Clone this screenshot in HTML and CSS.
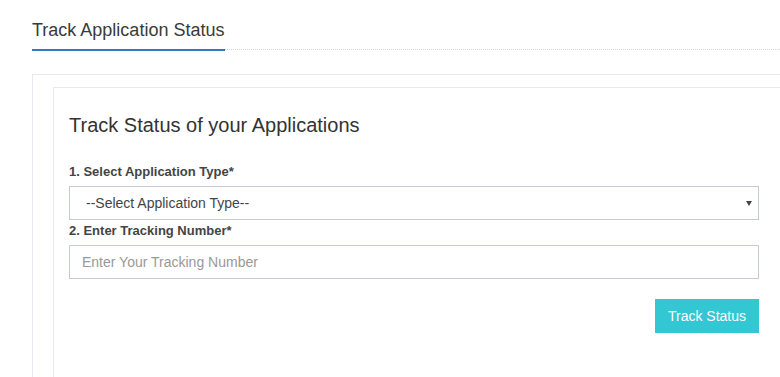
FILE: index.html
```html
<!DOCTYPE html>
<html lang="en">
<head>
<meta charset="UTF-8">
<meta name="viewport" content="width=device-width, initial-scale=1.0">
<title>Track Application Status</title>
<link rel="stylesheet" href="styles.css">
</head>
<body>

<div class="tabbar">
  <div class="tab">Track Application Status</div>
  <div class="tab-fill"></div>
</div>

<div class="outer">
  <div class="panel">
    <h2>Track Status of your Applications</h2>

    <label for="appType">1. Select Application Type*</label>
    <div class="select-wrap">
      <select id="appType">
        <option>--Select Application Type--</option>
      </select>
    </div>

    <label for="trackNo" class="second">2. Enter Tracking Number*</label>
    <input type="text" id="trackNo" placeholder="Enter Your Tracking Number">

    <div class="actions">
      <button type="button">Track Status</button>
    </div>
  </div>
</div>

</body>
</html>
```

FILE: styles.css
```css
body {
  margin: 0;
  font-family: "Liberation Sans", Arial, sans-serif;
  background-color: #fff;
  color: #333;
}

.tabbar {
  display: flex;
  align-items: flex-end;
  margin-left: 32px;
  padding-top: 19px;
}
.tab {
  font-size: 18px;
  line-height: 22px;
  color: #3a3a3a;
  padding-bottom: 8px;
  padding-right: 1px;
  border-bottom: 2px solid #337ab7;
}
.tab-fill {
  flex: 1;
  border-bottom: 1px dotted #d6d6d6;
  margin-bottom: 1px;
}

.outer {
  box-sizing: border-box;
  height: 303px;
  margin: 23px 0 0 32px;
  padding: 12px 0 0 20px;
  border: 1px solid #e6e9ed;
  border-right: none;
  border-bottom: none;
  overflow: hidden;
}
.panel {
  box-sizing: border-box;
  height: 290px;
  border: 1px solid #e6e9ed;
  border-right: none;
  border-bottom: none;
  padding: 26px 21px 0 15px;
}

h2 {
  margin: 0 0 27px;
  font-size: 20px;
  font-weight: normal;
  line-height: 22px;
  color: #333;
}

label {
  display: block;
  font-size: 13px;
  font-weight: bold;
  line-height: 18px;
  color: #444;
  margin-bottom: 5px;
}
label.second {
  margin-top: 2px;
}

.select-wrap {
  position: relative;
}
.select-wrap::after {
  content: "";
  position: absolute;
  right: 7px;
  top: 15px;
  border-left: 3px solid transparent;
  border-right: 3px solid transparent;
  border-top: 5px solid #444;
  pointer-events: none;
}

select,
input[type="text"] {
  display: block;
  box-sizing: border-box;
  width: 100%;
  height: 34px;
  border: 1px solid #c5cbd6;
  border-radius: 0;
  background: #fff;
  font-family: inherit;
  font-size: 14px;
  margin: 0;
}
select {
  appearance: none;
  -webkit-appearance: none;
  padding: 0 16px;
  color: #444;
}
input[type="text"] {
  padding: 0 12px;
  color: #444;
}
input::placeholder {
  color: #999;
}

.actions {
  display: flex;
  justify-content: flex-end;
  margin-top: 20px;
}
button {
  width: 104px;
  height: 34px;
  border: none;
  background-color: #33c6d3;
  color: #fff;
  font-family: inherit;
  font-size: 14px;
  cursor: pointer;
}
button:hover {
  background-color: #29b2be;
}
```
